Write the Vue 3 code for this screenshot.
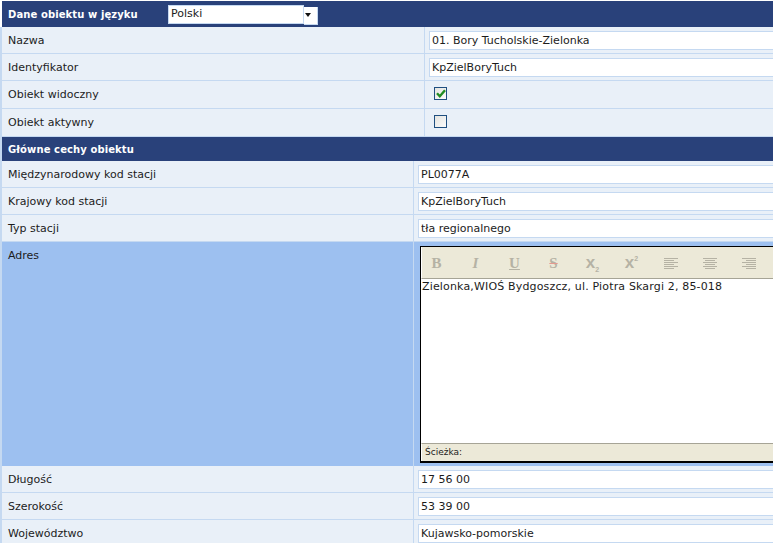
<template>
  <div class="form">
    <div class="section-head">
      <span class="head-label head-label-lang">Dane obiektu w języku</span>
      <div class="lang-select">
        <span class="lang-value">Polski</span>
        <span class="lang-button"><span class="lang-arrow"></span></span>
      </div>
    </div>

    <div
      v-for="row in objectRows"
      :key="row.label"
      class="row row-wide"
      :class="{ 'row-check': !row.value }"
    >
      <div class="cell-label">{{ row.label }}</div>
      <div class="cell-value">
        <input v-if="row.value" class="field" :value="row.value" readonly />
        <span v-else class="check">
          <svg v-if="row.checked" class="tick" width="10" height="9" viewBox="0 0 10 9">
            <path d="M1 4.2 L3.8 7.2 L9 1.2" fill="none" stroke="#218c21" stroke-width="2.4" />
          </svg>
        </span>
      </div>
    </div>

    <div class="section-head section-head-small">
      <span class="head-label">Główne cechy obiektu</span>
    </div>

    <div v-for="row in stationRows" :key="row.label" class="row row-narrow">
      <div class="cell-label">{{ row.label }}</div>
      <div class="cell-value">
        <input class="field" :value="row.value" readonly />
      </div>
    </div>

    <div class="row row-narrow row-address">
      <div class="cell-label">Adres</div>
      <div class="cell-value cell-editor">
        <div class="editor">
          <div class="toolbar">
            <span class="tool tool-b">B</span>
            <span class="tool tool-i">I</span>
            <span class="tool tool-u">U</span>
            <span class="tool tool-s">S</span>
            <span class="tool tool-x"><span>x<sub>2</sub></span></span>
            <span class="tool tool-x"><span>x<sup>2</sup></span></span>
            <span v-for="align in aligns" :key="align.name" class="tool">
              <svg width="14" height="11" viewBox="0 0 14 11">
                <rect
                  v-for="(w, i) in align.lines"
                  :key="i"
                  :x="align.name === 'left' ? 0 : align.name === 'right' ? 14 - w : (14 - w) / 2"
                  :y="i * 2"
                  :width="w"
                  height="1"
                  fill="#b5b2a4"
                />
              </svg>
            </span>
          </div>
          <div class="editor-body">Zielonka,WIOŚ Bydgoszcz, ul. Piotra Skargi 2, 85-018</div>
          <div class="statusbar">Ścieżka:</div>
        </div>
      </div>
    </div>

    <div v-for="row in locationRows" :key="row.label" class="row row-narrow">
      <div class="cell-label">{{ row.label }}</div>
      <div class="cell-value">
        <input class="field" :value="row.value" readonly />
      </div>
    </div>
  </div>
</template>

<script setup>
const objectRows = [
  { label: 'Nazwa', value: '01. Bory Tucholskie-Zielonka' },
  { label: 'Identyfikator', value: 'KpZielBoryTuch' },
  { label: 'Obiekt widoczny', checked: true },
  { label: 'Obiekt aktywny', checked: false },
]

const stationRows = [
  { label: 'Międzynarodowy kod stacji', value: 'PL0077A' },
  { label: 'Krajowy kod stacji', value: 'KpZielBoryTuch' },
  { label: 'Typ stacji', value: 'tła regionalnego' },
]

const locationRows = [
  { label: 'Długość', value: '17 56 00' },
  { label: 'Szerokość', value: '53 39 00' },
  { label: 'Województwo', value: 'Kujawsko-pomorskie' },
]

const aligns = [
  { name: 'left', lines: [14, 10, 14, 10, 14, 10] },
  { name: 'center', lines: [14, 10, 14, 10, 14, 10] },
  { name: 'right', lines: [14, 10, 14, 10, 14, 10] },
]
</script>

<style>
html,
body {
  margin: 0;
  overflow: hidden;
  background: #fff;
}
</style>

<style scoped>
.form {
  width: 773px;
  height: 543px;
  overflow: hidden;
  box-sizing: border-box;
  padding: 1px 0 0 2px;
  background: #fff;
  font-family: "DejaVu Sans", Verdana, sans-serif;
  font-size: 11px;
  color: #1c1c1c;
}

.section-head {
  display: flex;
  align-items: center;
  height: 26px;
  padding-left: 6px;
  background: #29417a;
  color: #fff;
  font-weight: 700;
}
.section-head-small {
  height: 24px;
  margin-left: -2px;
  border-left: 2px solid #c5d9f1;
}
.head-label {
  font-size: 10px;
  letter-spacing: 0.1px;
  white-space: nowrap;
}
.head-label-lang {
  width: 160px;
}

.lang-select {
  display: flex;
  align-items: flex-end;
  height: 20px;
  margin-top: 1px;
  color: #1c1c1c;
  font-weight: 400;
}
.lang-value {
  box-sizing: border-box;
  align-self: flex-start;
  width: 136px;
  height: 19px;
  padding: 1px 0 0 2px;
  background: #fff;
  border: 1px solid #c5d9f1;
}
.lang-button {
  display: flex;
  align-items: center;
  justify-content: center;
  box-sizing: border-box;
  width: 14px;
  height: 18px;
  padding-right: 5px;
  background: #fff;
  border: 1px solid #c5d9f1;
  border-width: 0 1px 1px 0;
}
.lang-arrow {
  border-left: 3.5px solid transparent;
  border-right: 3.5px solid transparent;
  border-top: 4px solid #111;
}

.row {
  display: grid;
  box-sizing: border-box;
  margin-left: -2px;
  background: #e9f0f8;
  border-left: 2px solid #c5d9f1;
  border-bottom: 1px solid #c5d9f1;
}
.row-wide {
  grid-template-columns: 422px 1fr;
  height: 27px;
}
.row-check {
  height: 28px;
}
.row-narrow {
  grid-template-columns: 411px 1fr;
  height: 27px;
}

.cell-label {
  padding: 7px 6px 0;
  white-space: nowrap;
}
.cell-value {
  display: flex;
  align-items: flex-start;
  box-sizing: border-box;
  padding: 4px 0 0 4px;
  border-left: 1px solid #c5d9f1;
  min-width: 0;
}

.field {
  box-sizing: border-box;
  flex: none;
  width: 500px;
  height: 19px;
  margin: 0;
  padding: 0 2px;
  border: 1px solid #c5d9f1;
  border-radius: 0;
  outline: none;
  background: #fff;
  font: inherit;
  color: inherit;
}

.check {
  display: flex;
  align-items: center;
  justify-content: center;
  box-sizing: border-box;
  width: 13px;
  height: 13px;
  margin: 2px 0 0 5px;
  border: 1px solid #1f4f80;
  background: linear-gradient(135deg, #e4e4e0, #fbfbfb);
}

.row-address {
  height: 224px;
  background: #9dc0f0;
  border-bottom: 0;
}
.cell-editor {
  padding: 4px 0 0 6px;
}

.editor {
  flex: none;
  display: flex;
  flex-direction: column;
  box-sizing: border-box;
  width: 500px;
  height: 217px;
  border: 1px solid #000;
  border-width: 1px 1px 2px;
  background: #fff;
}
.toolbar {
  display: flex;
  align-items: center;
  gap: 10px;
  box-sizing: border-box;
  height: 32px;
  padding-top: 1px;
  background: #ece9d8;
  border-left: 1px solid #fff;
  border-bottom: 1px solid #a6a496;
}
.tool {
  display: flex;
  align-items: center;
  justify-content: center;
  flex: none;
  width: 29px;
  height: 20px;
  color: #b5b2a4;
  font-family: "Liberation Serif", serif;
  font-size: 15px;
  font-weight: 700;
}
.tool-i {
  font-style: italic;
}
.tool-u {
  text-decoration: underline;
}
.tool-s {
  text-decoration: line-through;
  text-decoration-color: #e49a90;
}
.tool-x {
  font-family: "Liberation Sans", sans-serif;
  font-size: 17px;
}
.tool-x sub,
.tool-x sup {
  font-size: 7px;
  line-height: 0;
}

.editor-body {
  flex: 1;
  padding: 1px 2px 0 1px;
  background: #fff;
  letter-spacing: 0.16px;
  white-space: nowrap;
}
.statusbar {
  box-sizing: border-box;
  height: 18px;
  padding: 3px 0 0 3px;
  background: #ece9d8;
  border-top: 1px solid #a6a496;
  border-left: 1px solid #fff;
  font-size: 9px;
}
</style>
